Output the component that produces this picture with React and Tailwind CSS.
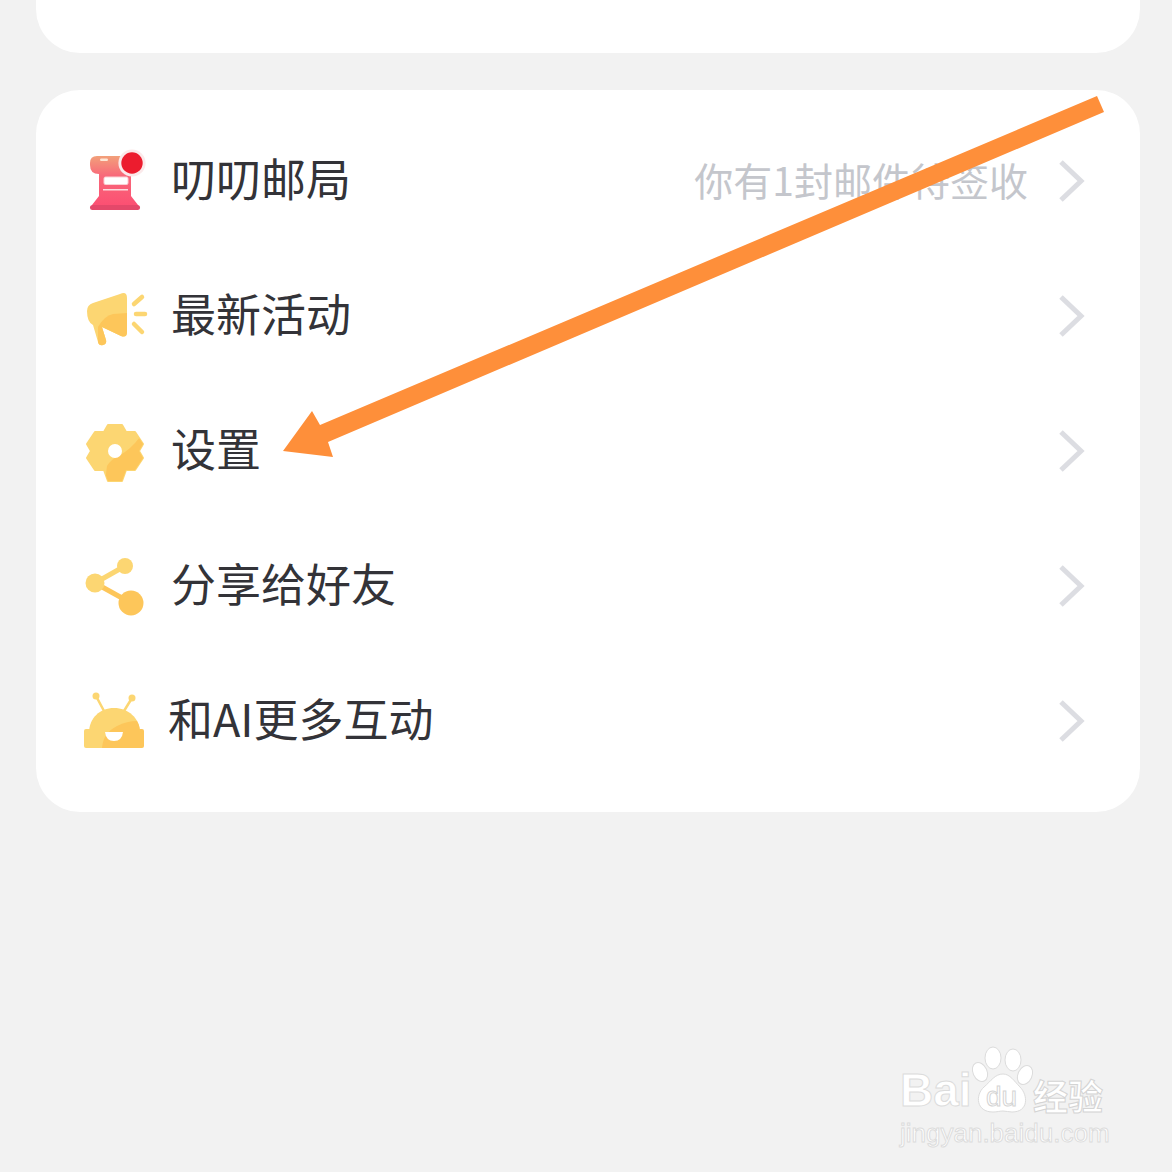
import React from "react";

const cjk = "font-['Noto_Sans_CJK_SC','Noto_Sans',sans-serif]";
const light = "#fcd672";
const dark = "#fdc65a";

const MailIcon = () => (
  <svg width="70" height="70" viewBox="80 146 70 70">
    <defs>
      <linearGradient id="mailBody" x1="0" y1="0" x2="0" y2="1">
        <stop offset="0" stopColor="#f2a07a" />
        <stop offset="0.4" stopColor="#f8697a" />
        <stop offset="1" stopColor="#fc5073" />
      </linearGradient>
    </defs>
    <path d="M90 163q0-7 7-7h30q8 0 8 7v8l-4 3v22l7 9H92l7-9v-22q-9 0-9-9z" fill="url(#mailBody)" />
    <rect x="90" y="205" width="50" height="5" rx="2.5" fill="#e4486a" />
    <rect x="100" y="158.5" width="8" height="2.5" rx="1.2" fill="#fde7d6" />
    <rect x="104" y="177" width="24" height="7.5" rx="1.5" fill="#fff" stroke="#fbd0d4" strokeWidth="1" />
    <rect x="103" y="189" width="25" height="1.5" fill="#fcd9dd" />
    <circle cx="132" cy="163" r="13.6" fill="#fbe9ea" />
    <circle cx="132" cy="163" r="10.7" fill="#ec1c2e" />
  </svg>
);

const MegaphoneIcon = () => (
  <svg width="70" height="70" viewBox="80 281 70 70">
    <defs>
      <clipPath id="hornClip">
        <path d="M120 294q7-3 7 4v34q0 6-6 4l-19-9 4 13q1 4-3 5-4 1-5-3l-5-17q-6-3-6-14 0-6 6-8z" />
      </clipPath>
    </defs>
    <g clipPath="url(#hornClip)">
      <rect x="80" y="285" width="50" height="65" fill={light} />
      <path d="M98 327q6-11 15-13l15-1v35H98z" fill={dark} />
    </g>
    <g stroke={light} strokeWidth="4.5" strokeLinecap="round">
      <path d="M134 304l8-7" />
      <path d="M136 314h9" />
      <path d="M134 324l8 8" />
    </g>
  </svg>
);

const gearPath =
  "M108 425L122 425L126 432L135 432L143 444L139 451L143 458L135 470L126 470L122 481L108 481L104 470L95 470L87 458L91 451L87 444L95 432L104 432Z";

const GearIcon = () => (
  <svg width="70" height="70" viewBox="80 416 70 70">
    <defs>
      <clipPath id="gearClip">
        <path d={gearPath} />
      </clipPath>
    </defs>
    <path d={gearPath} fill={light} stroke={light} strokeWidth="2" strokeLinejoin="round" />
    <g clipPath="url(#gearClip)">
      <path d="M105 482L107 466Q110 460 120 455Q130 450 140 437L150 440V482Z" fill={dark} />
    </g>
    <circle cx="115" cy="451" r="7" fill="#fff" />
  </svg>
);

const ShareIcon = () => (
  <svg width="70" height="70" viewBox="80 551 70 70">
    <path d="M125 566L95 583" stroke={light} strokeWidth="5" />
    <path d="M95 583l36 20" stroke={dark} strokeWidth="5" />
    <circle cx="125" cy="566" r="8" fill={light} />
    <circle cx="95" cy="583" r="9.5" fill={light} />
    <circle cx="131" cy="603" r="12.5" fill={dark} />
  </svg>
);

const RobotIcon = () => (
  <svg width="70" height="70" viewBox="80 686 70 70">
    <path d="M96 696l8 15M132 698l-8 13" stroke={light} strokeWidth="2.5" />
    <circle cx="96" cy="696" r="3.5" fill={light} />
    <circle cx="132" cy="698" r="3.5" fill={light} />
    <rect x="84" y="729" width="10" height="19" rx="2" fill={light} />
    <rect x="134" y="729" width="10" height="19" rx="2" fill={dark} />
    <path d="M89 748v-15c0-15 11-25 25-25s26 10 26 25v15z" fill={light} />
    <path d="M102 748q1-15 15-22 10-5 20-5 3 5 3 12v15z" fill={dark} />
    <path d="M105 732h18q-1 9-9 9t-9-9z" fill="#fff" />
  </svg>
);

const Chevron = () => (
  <svg width="30" height="44" viewBox="0 0 30 44" className="shrink-0">
    <path d="M4 3l20 19L4 41" fill="none" stroke="#dcdde2" strokeWidth="5" />
  </svg>
);

const rows = [
  { icon: <MailIcon />, label: "叨叨邮局", note: "你有1封邮件待签收" },
  { icon: <MegaphoneIcon />, label: "最新活动" },
  { icon: <GearIcon />, label: "设置" },
  { icon: <ShareIcon />, label: "分享给好友" },
  { icon: <RobotIcon />, label: "和AI更多互动", tight: true },
];

const Watermark = () => (
  <div className="absolute left-[900px] top-[1044px] flex w-[216px] flex-col">
    <div className="flex h-[72px] items-end">
      <span className="mb-[2px] w-[70px] shrink-0 text-[46px] leading-[48px] font-bold text-white font-['Liberation_Sans',sans-serif] [-webkit-text-stroke:1px_#dcdcdc]">
        Bai
      </span>
      <div className="relative h-[72px] w-[63px] shrink-0">
        <svg width="64" height="72" viewBox="0 0 64 72">
          <g fill="#fff" stroke="#dcdcdc" strokeWidth="1">
            <ellipse cx="10" cy="28" rx="7" ry="10" transform="rotate(-25 10 28)" />
            <ellipse cx="23" cy="14" rx="8" ry="11" />
            <ellipse cx="43" cy="16" rx="8" ry="11" />
            <ellipse cx="55" cy="31" rx="7" ry="10" transform="rotate(25 55 31)" />
            <path d="M33 30c7 0 11 7 17 13 8 8 9 25-8 25-3 0-6-1-9-1s-6 1-10 1C6 68 5 51 14 43c7-6 11-13 19-13z" />
          </g>
        </svg>
        <span className="absolute bottom-[2px] left-0 w-full text-center text-[28px] leading-[34px] text-white font-['Liberation_Sans',sans-serif] [-webkit-text-stroke:1px_#d4d4d4]">
          du
        </span>
      </div>
      <span className="text-[35px] leading-[42px] font-bold text-white [-webkit-text-stroke:1px_#d4d4d4]">
        经验
      </span>
    </div>
    <span className="mt-[3px] whitespace-nowrap text-[26px] leading-[28px] text-white font-['Liberation_Sans',sans-serif] [-webkit-text-stroke:1px_#dcdcdc]">
      jingyan.baidu.com
    </span>
  </div>
);

export default function App() {
  return (
    <div className={`relative h-[1172px] overflow-hidden bg-[#f2f2f2] ${cjk}`}>
      <div className="ml-[36px] mr-[32px] h-[53px] rounded-b-[44px] bg-white" />

      <section className="ml-[36px] mr-[32px] mt-[37px] rounded-[44px] bg-white pt-[23.5px] pb-[23.5px] pl-[44px] pr-[53px]">
        {rows.map((row) => (
          <div key={row.label} className="flex h-[135px] items-center">
            <div className="mr-[21px] h-[70px] w-[70px] shrink-0">{row.icon}</div>
            <span className={`pb-[6px] text-[45px] leading-[60px] text-[#333338] ${row.tight ? "-ml-[3px]" : ""}`}>
              {row.label}
            </span>
            {row.note && (
              <span className="ml-auto mr-[29px] pb-[4px] text-[39px] leading-[56px] text-[#c4c6cc]">{row.note}</span>
            )}
            <div className={row.note ? "" : "ml-auto"}>
              <Chevron />
            </div>
          </div>
        ))}
      </section>

      {/* annotation drawn over the screenshot */}
      <svg width="1172" height="1172" viewBox="0 0 1172 1172" className="absolute left-0 top-0">
        <polygon
          points="1097,96 1104,112 328,442 333,457 283,451 312,411 320,425"
          fill="#fe8f3a"
        />
      </svg>

      <Watermark />
    </div>
  );
}
